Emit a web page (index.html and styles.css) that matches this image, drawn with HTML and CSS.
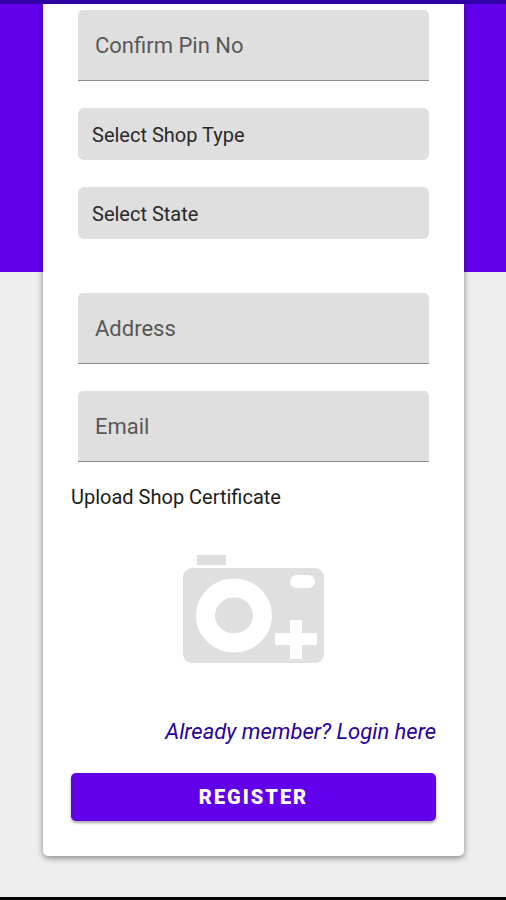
FILE: index.html
```html
<!DOCTYPE html>
<html lang="en">
<head>
<meta charset="utf-8">
<meta name="viewport" content="width=device-width, initial-scale=1">
<title>Register</title>
<link rel="stylesheet" href="styles.css">
</head>
<body>
<div class="status-bar"></div>
<main class="page">
  <form class="card">
    <div class="fields">
      <input class="field" type="password" placeholder="Confirm Pin No" aria-label="Confirm Pin No">
      <select class="picker" aria-label="Select Shop Type"><option>Select Shop Type</option></select>
      <select class="picker picker-last" aria-label="Select State"><option>Select State</option></select>
      <input class="field" type="text" placeholder="Address" aria-label="Address">
      <input class="field" type="email" placeholder="Email" aria-label="Email">
    </div>
    <label class="upload" for="certificate">
      <span class="upload-title">Upload Shop Certificate</span>
      <svg class="camera" viewBox="0 0 142 110" aria-hidden="true">
        <path fill="#dfdfdf" d="M14 0h29v10H14z"/>
        <rect fill="#dfdfdf" x="0" y="13" width="141" height="95" rx="9"/>
        <ellipse fill="none" stroke="#fff" stroke-width="19" cx="51" cy="60.500" rx="28.500" ry="27.500"/>
        <rect fill="#fff" x="107" y="20" width="25" height="13" rx="6.500"/>
        <path fill="#fff" d="M107 65h12v13h15v12h-15v14h-12V90H92V78h15z"/>
      </svg>
    </label>
    <input class="file-input" id="certificate" type="file">
    <a class="login" href="#login">Already member? Login here</a>
    <button class="register" type="submit">REGISTER</button>
  </form>
</main>
<div class="nav-bar"></div>
</body>
</html>
```
FILE: styles.css
```css
* {
  box-sizing: border-box;
}

body {
  margin: 0;
  min-height: 100vh;
  display: flex;
  flex-direction: column;
  background: #eee;
  color: #1c1c1c;
  font-family: Roboto, sans-serif;
}

.status-bar {
  height: 4px;
  background: #3000a8;
}

.nav-bar {
  height: 3px;
  background: #000;
}

.page {
  flex: 1;
  padding: 0 42px 40px 43px;
  background: linear-gradient(#6200ee 268px, #eee 268px);
}

.card {
  display: flex;
  flex-direction: column;
  padding: 6px 28px 35px;
  border-radius: 0 0 5px 5px;
  background: #fff;
  box-shadow: 0 2px 6px rgba(0, 0, 0, 0.45);
}

.fields {
  display: flex;
  flex-direction: column;
  gap: 27px;
  padding: 0 7px;
}

.field,
.picker {
  width: 100%;
  border: 0;
  background: #dfdfdf;
  font-family: inherit;
  appearance: none;
}

.field {
  height: 71px;
  padding: 0 17px;
  border-bottom: 1px solid #8c8c8c;
  border-radius: 5px 5px 0 0;
  font-size: 22px;
}

.field::placeholder {
  color: #585858;
  opacity: 1;
}

.picker {
  height: 52px;
  padding: 2px 14px 0;
  border-radius: 6px;
  color: #2a2a2a;
  font-size: 20px;
}

.picker-last {
  margin-bottom: 27px;
}

.upload {
  display: flex;
  flex-direction: column;
  gap: 46px;
  margin-top: 23px;
}

.upload-title {
  font-size: 20px;
  line-height: 24px;
}

.camera {
  width: 142px;
  align-self: center;
}

.file-input {
  position: absolute;
  width: 1px;
  height: 1px;
  overflow: hidden;
  opacity: 0;
}

.login {
  align-self: flex-end;
  margin-top: 53px;
  color: #2a00a0;
  font-size: 22px;
  font-style: italic;
  line-height: 28px;
  text-decoration: none;
}

.register {
  height: 48px;
  margin-top: 27px;
  border: 0;
  border-radius: 5px;
  background: #6200ee;
  box-shadow: 0 2px 3px rgba(0, 0, 0, 0.35);
  color: #fff;
  font-family: inherit;
  font-size: 20px;
  font-weight: 900;
  letter-spacing: 2px;
}
```
